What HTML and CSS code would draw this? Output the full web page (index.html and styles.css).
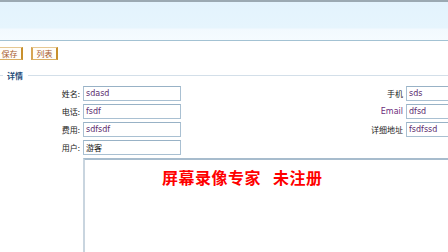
FILE: index.html
```html
<!DOCTYPE html>
<html lang="zh-CN">
<head>
  <meta charset="UTF-8" />
  <meta name="viewport" content="width=device-width, initial-scale=1.0" />
  <title>详情</title>
  <link rel="stylesheet" href="styles.css">
</head>
<body>
  <div class="page">
    <div class="header"></div>

    <div class="toolbar">
      <button type="button">保存</button>
      <button type="button">列表</button>
    </div>

    <div class="section-head">
      <span class="line short"></span>
      <span class="title">详情</span>
      <span class="line"></span>
    </div>

    <form class="detail-form">
      <label>姓名:</label>
      <input type="text" value="sdasd" />
      <span></span>
      <label>手机</label>
      <input type="text" value="sds" />

      <label>电话:</label>
      <input type="text" value="fsdf" />
      <span></span>
      <label class="email">Email</label>
      <input type="text" value="dfsd" />

      <label>费用:</label>
      <input type="text" value="sdfsdf" />
      <span></span>
      <label>详细地址</label>
      <input type="text" value="fsdfssd" />

      <label>用户:</label>
      <input type="text" class="plain" value="游客" />
      <span></span>
      <span></span>
      <span></span>

      <div class="memo">
        <textarea></textarea>
        <div class="watermark"><span>屏幕录像专家</span><span>未注册</span></div>
      </div>
    </form>
  </div>
</body>
</html>
```

FILE: styles.css
```css
body {
  margin: 0;
  padding: 0;
  background-color: white;
  font-family: "Noto Sans CJK SC", "DejaVu Sans", sans-serif;
  font-size: 8px;
  color: #222;
  overflow: hidden;
}

.page {
  width: 448px;
  height: 252px;
  overflow: hidden;
}

.header {
  height: 38px;
  border-top: 2px solid #9ba9b2;
  border-bottom: 1px solid #a3c2d3;
  background: linear-gradient(to bottom, #e3f3fd 0, #e6f5fd 26px, #f2f9fe 27px, #f5fbff 38px);
}

.toolbar {
  display: flex;
  gap: 8px;
  margin: 6px 0 0 -4px;
}

.toolbar button {
  width: 27px;
  height: 13px;
  padding: 0;
  font-family: "Noto Sans CJK SC", sans-serif;
  font-size: 8px;
  line-height: 10px;
  color: #a65a2e;
  background-color: #fffdf9;
  border: 1px solid #e6c893;
  border-left: 2px solid #d6a553;
  border-right: 2px solid #c8902d;
  border-bottom-color: #d9ae63;
}

.section-head {
  display: flex;
  align-items: center;
  margin-top: 11px;
  height: 9px;
}

.section-head .line {
  flex: 1;
  height: 1px;
  background-color: #d3dfe9;
}

.section-head .line.short {
  flex: none;
  width: 3px;
}

.section-head .title {
  padding: 0 5px 0 4px;
  font-weight: bold;
  color: #1f4d7a;
  line-height: 9px;
}

.detail-form {
  display: grid;
  grid-template-columns: 80px 98px 1fr auto 98px;
  column-gap: 3px;
  row-gap: 3px;
  width: 504px;
  margin-top: 6px;
}

.detail-form label {
  text-align: right;
  line-height: 15px;
}

.detail-form label.email {
  font-family: "DejaVu Sans", sans-serif;
  font-size: 8px;
  color: #6b2d7c;
}

.detail-form input {
  box-sizing: border-box;
  height: 15px;
  padding: 0 2px;
  margin: 0;
  font-family: "DejaVu Sans", "Noto Sans CJK SC", sans-serif;
  font-size: 8px;
  color: #5a2a6c;
  border: 1px solid #a9c0d2;
  border-top-color: #98b2c6;
  background-color: white;
}

.detail-form input.plain {
  color: #111;
  font-family: "Noto Sans CJK SC", sans-serif;
}

.memo {
  grid-column: 2 / -1;
  position: relative;
  height: 100px;
}

.memo textarea {
  box-sizing: border-box;
  width: 100%;
  height: 100%;
  margin: 0;
  border: 1px solid #c5d2dd;
  border-top: 2px solid #a7bccd;
  border-left: 2px solid #c9d5df;
  resize: none;
}

.watermark {
  position: absolute;
  top: 10px;
  left: 79px;
  display: flex;
  gap: 12px;
  font-family: "Noto Sans CJK SC", serif;
  font-size: 16px;
  font-weight: bold;
  line-height: 18px;
  letter-spacing: 0.5px;
  color: #ff0000;
  pointer-events: none;
}
```
